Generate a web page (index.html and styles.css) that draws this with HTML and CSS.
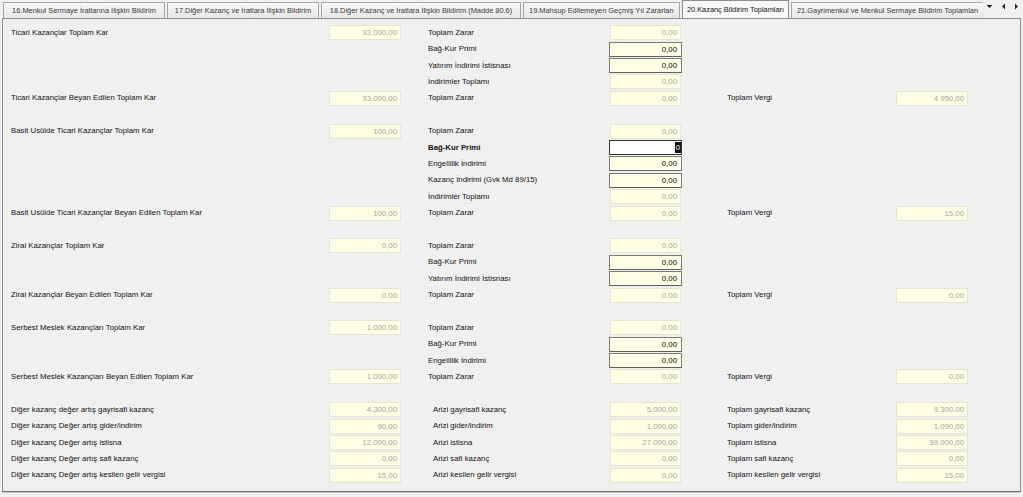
FILE: index.html
```html
<!DOCTYPE html>
<html lang="tr">
<head>
<meta charset="utf-8">
<title>Kazanç Bildirim Toplamları</title>
<link rel="stylesheet" href="styles.css">
</head>
<body>
<div class="tabbar">
  <div class="tabs">
    <div class="tab t16">16.Menkul Sermaye İratlarına İlişkin Bildirim</div>
    <div class="tab t17">17.Diğer Kazanç ve İratlara İlişkin Bildirim</div>
    <div class="tab t18">18.Diğer Kazanç ve İratlara İlişkin Bildirim (Madde 80.6)</div>
    <div class="tab t19">19.Mahsup Edilemeyen Geçmiş Yıl Zararları</div>
    <div class="tab t20 active">20.Kazanç Bildirim Toplamları</div>
    <div class="tab t21">21.Gayrimenkul ve Menkul Sermaye Bildirim Toplamları</div>
  </div>
  <div class="tabnav">
    <svg class="nav down" width="7" height="5" viewBox="0 0 7 5"><path d="M0.5 1 L6.5 1 L3.5 4 Z" fill="#222"/></svg>
    <svg class="nav left" width="5" height="7" viewBox="0 0 5 7"><path d="M4 0.5 L4 6.5 L1 3.5 Z" fill="#222"/></svg>
    <svg class="nav right" width="5" height="7" viewBox="0 0 5 7"><path d="M1 0.5 L1 6.5 L4 3.5 Z" fill="#222"/></svg>
  </div>
</div>

<div class="panel">
  <div class="sec">
    <div class="row"><span class="lbl c1">Ticari Kazançlar Toplam Kar</span><span class="fld c2">33.000,00</span><span class="lbl c4">Toplam Zarar</span><span class="fld c5">0,00</span></div>
    <div class="row"><span class="lbl c4">Bağ-Kur Primi</span><span class="fld ed c5">0,00</span></div>
    <div class="row"><span class="lbl c4">Yatırım İndirimi İstisnası</span><span class="fld ed c5">0,00</span></div>
    <div class="row"><span class="lbl c4">İndirimler Toplamı</span><span class="fld c5">0,00</span></div>
    <div class="row"><span class="lbl c1">Ticari Kazançlar Beyan Edilen Toplam Kar</span><span class="fld c2">33.000,00</span><span class="lbl c4">Toplam Zarar</span><span class="fld c5">0,00</span><span class="lbl c7">Toplam Vergi</span><span class="fld c8">4.950,00</span></div>
  </div>

  <div class="sec">
    <div class="row"><span class="lbl c1">Basit Usülde Ticari Kazançlar Toplam Kar</span><span class="fld c2">100,00</span><span class="lbl c4">Toplam Zarar</span><span class="fld c5">0,00</span></div>
    <div class="row"><span class="lbl c4 bold">Bağ-Kur Primi</span><span class="fld focus c5"><span class="sel">0</span></span></div>
    <div class="row"><span class="lbl c4">Engellilik İndirimi</span><span class="fld ed c5">0,00</span></div>
    <div class="row"><span class="lbl c4">Kazanç İndirimi (Gvk Md 89/15)</span><span class="fld ed c5">0,00</span></div>
    <div class="row"><span class="lbl c4">İndirimler Toplamı</span><span class="fld c5">0,00</span></div>
    <div class="row"><span class="lbl c1">Basit Usülde Ticari Kazançlar Beyan Edilen Toplam Kar</span><span class="fld c2">100,00</span><span class="lbl c4">Toplam Zarar</span><span class="fld c5">0,00</span><span class="lbl c7">Toplam Vergi</span><span class="fld c8">15,00</span></div>
  </div>

  <div class="sec">
    <div class="row"><span class="lbl c1">Zirai Kazançlar Toplam Kar</span><span class="fld c2">0,00</span><span class="lbl c4">Toplam Zarar</span><span class="fld c5">0,00</span></div>
    <div class="row"><span class="lbl c4">Bağ-Kur Primi</span><span class="fld ed c5">0,00</span></div>
    <div class="row"><span class="lbl c4">Yatırım İndirimi İstisnası</span><span class="fld ed c5">0,00</span></div>
    <div class="row"><span class="lbl c1">Zirai Kazançlar Beyan Edilen Toplam Kar</span><span class="fld c2">0,00</span><span class="lbl c4">Toplam Zarar</span><span class="fld c5">0,00</span><span class="lbl c7">Toplam Vergi</span><span class="fld c8">0,00</span></div>
  </div>

  <div class="sec">
    <div class="row"><span class="lbl c1">Serbest Meslek Kazançları Toplam Kar</span><span class="fld c2">1.000,00</span><span class="lbl c4">Toplam Zarar</span><span class="fld c5">0,00</span></div>
    <div class="row"><span class="lbl c4">Bağ-Kur Primi</span><span class="fld ed c5">0,00</span></div>
    <div class="row"><span class="lbl c4">Engellilik İndirimi</span><span class="fld ed c5">0,00</span></div>
    <div class="row"><span class="lbl c1">Serbest Meslek Kazançları Beyan Edilen Toplam Kar</span><span class="fld c2">1.000,00</span><span class="lbl c4">Toplam Zarar</span><span class="fld c5">0,00</span><span class="lbl c7">Toplam Vergi</span><span class="fld c8">0,00</span></div>
  </div>

  <div class="sec">
    <div class="row"><span class="lbl c1">Diğer kazanç değer artış gayrisafi kazanç</span><span class="fld c2">4.300,00</span><span class="lbl c4 ind">Arizi gayrisafi kazanç</span><span class="fld c5">5.000,00</span><span class="lbl c7">Toplam gayrisafi kazanç</span><span class="fld c8">9.300,00</span></div>
    <div class="row"><span class="lbl c1">Diğer kazanç Değer artış gider/indirim</span><span class="fld c2">90,00</span><span class="lbl c4 ind">Arizi gider/indirim</span><span class="fld c5">1.000,00</span><span class="lbl c7">Toplam gider/indirim</span><span class="fld c8">1.090,00</span></div>
    <div class="row"><span class="lbl c1">Diğer kazanç Değer artış istisna</span><span class="fld c2">12.000,00</span><span class="lbl c4 ind">Arizi istisna</span><span class="fld c5">27.000,00</span><span class="lbl c7">Toplam istisna</span><span class="fld c8">39.000,00</span></div>
    <div class="row"><span class="lbl c1">Diğer kazanç Değer artış safi kazanç</span><span class="fld c2">0,00</span><span class="lbl c4 ind">Arizi safi kazanç</span><span class="fld c5">0,00</span><span class="lbl c7">Toplam safi kazanç</span><span class="fld c8">0,00</span></div>
    <div class="row"><span class="lbl c1">Diğer kazanç Değer artış kesilen gelir vergisi</span><span class="fld c2">15,00</span><span class="lbl c4 ind">Arizi kesilen gelir vergisi</span><span class="fld c5">0,00</span><span class="lbl c7">Toplam kesilen gelir vergisi</span><span class="fld c8">15,00</span></div>
  </div>
</div>
</body>
</html>
```

FILE: styles.css
```css
html, body {
  margin: 0;
  padding: 0;
  background: #f0f0f0;
}
body {
  width: 1023px;
  height: 497px;
  overflow: hidden;
  font-family: "Liberation Sans", Arial, sans-serif;
  font-size: 7.8px;
  color: #111;
}

/* ---------- tab strip ---------- */
.tabbar {
  display: flex;
  height: 18px;
  align-items: flex-end;
  padding-left: 3px;
  position: relative;
  z-index: 2;
}
.tabs {
  display: flex;
  align-items: flex-end;
  gap: 2px;
  width: 980px;
  overflow: hidden;
  flex: none;
}
.tab {
  flex: none;
  box-sizing: border-box;
  height: 16px;
  line-height: 15px;
  padding: 0 3px;
  border: 1px solid #a7a7a7;
  border-bottom: none;
  background: linear-gradient(#f7f7f7, #e7e7e7);
  color: #3a3a3a;
  font-size: 7.4px;
  text-align: center;
  white-space: nowrap;
  overflow: hidden;
}
.t16 { width: 162px; }
.t17 { width: 152px; }
.t18 { width: 200px; }
.t19 { width: 157px; }
.t20 { width: 107px; }
.t21 { width: 200px; text-align: left; padding-left: 5px; }
.tab.active {
  height: 19px;
  line-height: 17px;
  margin-bottom: -1px;
  background: #f8f8f8;
  color: #111;
  border-color: #8e8e8e;
}
.tabnav {
  display: flex;
  align-items: flex-start;
  gap: 8px;
  padding: 4px 0 0 3px;
  align-self: stretch;
}
.nav { display: block; }
.nav.left, .nav.right { margin-top: -1px; }

/* ---------- panel ---------- */
.panel {
  box-sizing: border-box;
  margin: 0 2px;
  height: 474px;
  border: 1px solid #8e8e8e;
  border-bottom-color: #6f6f6f;
  box-shadow: 0 1px 0 #c9c9c9;
  background: #f0f0f0;
  padding: 5.6px 0 0 8px;
}
.sec + .sec { margin-top: 16.4px; }

.row {
  display: grid;
  grid-template-columns: 318px 72px 27px 182px 71px 46px 169px 72px;
  height: 16.4px;
  align-items: center;
}
.c1 { grid-column: 1; }
.c2 { grid-column: 2; }
.c4 { grid-column: 4; }
.c5 { grid-column: 5; }
.c7 { grid-column: 7; }
.c8 { grid-column: 8; }

.lbl {
  white-space: nowrap;
  line-height: 12px;
}
.lbl.bold { font-weight: bold; }
.lbl.ind { padding-left: 5px; }

.fld {
  box-sizing: border-box;
  height: 15px;
  line-height: 13px;
  border: 1px solid #e6e5d2;
  background: #ffffe3;
  color: #a4a4a4;
  text-align: right;
  padding-right: 3px;
  white-space: nowrap;
}
.fld.ed {
  margin: 0 -1px;
  border-color: #7a7a7a;
  border-bottom-color: #5e5e5e;
  background: #fffee6;
  color: #000;
  padding-right: 4px;
}
.fld.focus {
  margin: 0 -1px;
  border-color: #333;
  background: #ffffff;
  color: #000;
  padding-right: 0;
}
.sel {
  display: inline-block;
  background: #111;
  color: #fff;
  line-height: 11px;
  padding: 0 1px;
  vertical-align: top;
  margin-top: 1px;
}
```
